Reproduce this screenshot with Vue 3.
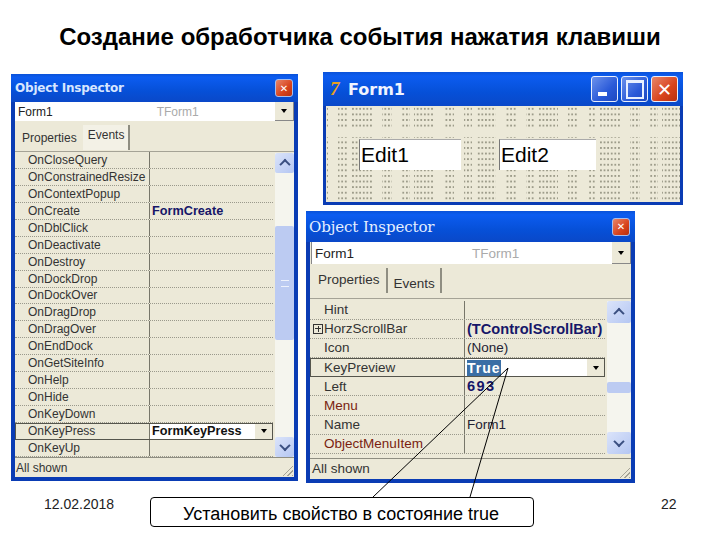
<script setup>
const eventRows = ['OnCloseQuery','OnConstrainedResize','OnContextPopup','OnCreate','OnDblClick','OnDeactivate','OnDestroy','OnDockDrop','OnDockOver','OnDragDrop','OnDragOver','OnEndDock','OnGetSiteInfo','OnHelp','OnHide','OnKeyDown','OnKeyPress','OnKeyUp'].map(name => ({
  name,
  value: name === 'OnCreate' ? 'FormCreate' : name === 'OnKeyPress' ? 'FormKeyPress' : '',
  bold: name === 'OnCreate',
  selected: name === 'OnKeyPress'
}))
const propRows = [
  { name: 'Hint', value: '' },
  { name: 'HorzScrollBar', value: '(TControlScrollBar)', bold: true, plus: true },
  { name: 'Icon', value: '(None)' },
  { name: 'KeyPreview', value: 'True', selected: true },
  { name: 'Left', value: '693', bold: true, wide: true },
  { name: 'Menu', value: '', red: true },
  { name: 'Name', value: 'Form1' },
  { name: 'ObjectMenuItem', value: '', red: true }
]
</script>

<template>
  <div class="slide">
    <h1 class="heading">Создание обработчика события нажатия клавиши</h1>

    <div class="desk">
      <section class="win insp-a">
        <header class="title">
          <span class="title-text">Object Inspector</span>
          <span class="btn close small">✕</span>
        </header>
        <div class="combo">
          <span class="combo-name">Form1</span>
          <span class="combo-type">TForm1</span>
          <span class="combo-arrow"><i class="tri"></i></span>
        </div>
        <div class="tabs">
          <span class="tab">Properties</span>
          <span class="tab active">Events</span>
        </div>
        <div class="grid-wrap">
          <div class="grid">
            <div v-for="r in eventRows" :key="r.name" class="row" :class="{ sel: r.selected }">
              <span class="name">{{ r.name }}</span>
              <span class="val" :class="{ bold: r.bold, strong: r.selected }">
                {{ r.value }}
                <span v-if="r.selected" class="drop"><i class="tri"></i></span>
              </span>
            </div>
          </div>
          <div class="scroll">
            <span class="sbtn"><i class="chev up"></i></span>
            <span class="track"><span class="thumb"><i class="grip"></i></span></span>
            <span class="sbtn"><i class="chev"></i></span>
          </div>
        </div>
        <footer class="status">All shown<i class="resize"></i></footer>
      </section>

      <section class="win form">
        <header class="title form-title">
          <span class="logo">7</span>
          <span class="form-text">Form1</span>
          <span class="btn blue"><i class="min"></i></span>
          <span class="btn blue"><i class="max"></i></span>
          <span class="btn close">✕</span>
        </header>
        <div class="client">
          <span class="edit">Edit1</span>
          <span class="edit">Edit2</span>
        </div>
      </section>

      <section class="win insp-b">
        <header class="title">
          <span class="title-text">Object Inspector</span>
          <span class="btn close small">✕</span>
        </header>
        <div class="combo">
          <span class="combo-name">Form1</span>
          <span class="combo-type">TForm1</span>
          <span class="combo-arrow"><i class="tri"></i></span>
        </div>
        <div class="tabs">
          <span class="tab active">Properties</span>
          <span class="tab">Events</span>
        </div>
        <div class="grid-wrap">
          <div class="grid">
            <div v-for="r in propRows" :key="r.name" class="row" :class="{ sel: r.selected }">
              <span class="name" :class="{ red: r.red }"><i v-if="r.plus" class="plus"></i>{{ r.name }}</span>
              <span class="val" :class="{ bold: r.bold, spaced: r.wide }">
                <mark v-if="r.selected" class="hl">{{ r.value }}</mark>
                <template v-else>{{ r.value }}</template>
                <span v-if="r.selected" class="drop"><i class="tri"></i></span>
              </span>
            </div>
          </div>
          <div class="scroll">
            <span class="sbtn"><i class="chev up"></i></span>
            <span class="track"><span class="thumb"></span></span>
            <span class="sbtn"><i class="chev"></i></span>
          </div>
        </div>
        <footer class="status">All shown<i class="resize"></i></footer>
      </section>
    </div>

    <footer class="foot">
      <span class="date">12.02.2018</span>
      <span class="callout">Установить свойство в состояние true</span>
      <span class="page">22</span>
    </footer>

    <svg class="leaders" width="720" height="540" viewBox="0 0 720 540">
      <path d="M373 497 L508 368 L470 497" fill="none" stroke="#000" stroke-width="1" />
    </svg>
  </div>
</template>

<style scoped>
.slide {
  position: relative;
  width: 720px;
  height: 540px;
  overflow: hidden;
  background: #fff;
  font-family: "Liberation Sans", Arial, sans-serif;
  color: #111;
}
.heading {
  margin: 0;
  height: 60px;
  padding-top: 24px;
  box-sizing: border-box;
  font-size: 24px;
  line-height: 26px;
  font-weight: 700;
  text-align: center;
  color: #000;
  white-space: nowrap;
}
.desk {
  position: relative;
  height: 430px;
}
.win {
  position: absolute;
  box-sizing: border-box;
  display: flex;
  flex-direction: column;
  background: #ece9d8;
  border: 4px solid #0a3cb4;
  border-top: 0;
  border-radius: 4px 4px 0 0;
}
.insp-a { left: 11px; top: 14px; width: 287px; height: 407px; font-size: 12px; }
.insp-b { left: 306px; top: 151px; width: 329px; height: 272px; font-size: 13.5px; }
.form { left: 323px; top: 12px; width: 360px; height: 133px; border-width: 0 3px 3px; }

.title {
  display: flex;
  align-items: center;
  flex: none;
  margin: 0 -4px;
  padding: 0 5px 0 4px;
  background: linear-gradient(#0a52d8, #0c5cf0 12%, #0650d8 60%, #0a48c8);
  color: #eaf2ff;
}
.insp-a .title { height: 28px; }
.insp-b .title { height: 31px; padding-left: 3px; }
.title-text { flex: 1; white-space: nowrap; }
.insp-a .title-text { font: 700 12px "DejaVu Sans", sans-serif; letter-spacing: -0.2px; color: #d8e6ff; }
.insp-b .title-text { font: 400 15px "DejaVu Serif", serif; letter-spacing: -0.1px; color: #e4eeff; }

.btn {
  display: flex;
  align-items: center;
  justify-content: center;
  box-sizing: border-box;
  width: 27px;
  height: 26px;
  border: 1px solid #e8eefc;
  border-radius: 3px;
  color: #fff;
  font: 700 18px "DejaVu Sans", sans-serif;
}
.btn.close { background: linear-gradient(135deg, #e8866a, #d8431c 60%, #b83010); }
.btn.small { width: 18px; height: 18px; font-size: 10px; border-color: #a9bdeb; }
.btn.blue { background: linear-gradient(135deg, #6c92ec, #2a5ad8 60%, #1d48c0); margin-right: 3px; }
.min { width: 9px; height: 4px; background: #fff; margin-top: 10px; margin-right: 4px; }
.max { width: 14px; height: 14px; border: 2px solid #e8f0ff; border-top-width: 3px; }

.form-title { height: 34px; margin: 0 -3px; padding: 0 5px 0 7px; }
.logo { width: 14px; font: italic 700 19px "Liberation Serif", serif; color: #e8a020; }
.form-text { flex: 1; margin-left: 4px; font: 700 16px "DejaVu Sans", sans-serif; color: #f0f4ff; }
.client {
  flex: 1;
  display: flex;
  align-items: flex-start;
  gap: 38px;
  padding: 33px 0 0 33px;
  background-color: #ece9d8;
  background-image:
    linear-gradient(#ece9d8, #ece9d8),
    repeating-linear-gradient(90deg, transparent 0 8px, #ece9d8 8px 12px, transparent 12px 32px, #ece9d8 32px 42px, transparent 42px 52px, #ece9d8 52px 62px),
    radial-gradient(circle, #8f8e7c 0.6px, transparent 0.9px);
  background-size: 100% 10px, auto, 3.6px 5.6px;
  background-position: 0 21px, 14px 0, 0 0;
  background-repeat: no-repeat, repeat, repeat;
}
.edit {
  box-sizing: border-box;
  width: 102px;
  height: 31px;
  padding-left: 1px;
  background: #fff;
  border-left: 1px solid #777;
  border-top: 1px solid #aaa;
  font-size: 21px;
  line-height: 29px;
  color: #000;
}
.edit + .edit { width: 97px; }

.combo {
  display: flex;
  align-items: center;
  flex: none;
  background: #fff;
  padding-left: 3px;
  white-space: nowrap;
}
.insp-a .combo { height: 19px; }
.insp-b .combo { height: 22px; margin-left: 1px; border-left: 1px solid #888; }
.combo-name { color: #222; }
.combo-type { color: #aaa; }
.insp-a .combo-type { margin-left: 104px; flex: 1; }
.insp-b .combo-type { margin-left: 118px; flex: 1; }
.combo-arrow {
  display: flex;
  align-items: center;
  justify-content: center;
  align-self: stretch;
  width: 18px;
  background: #ece9d8;
  border-right: 1px solid #888;
  border-bottom: 1px solid #888;
}
.tri {
  width: 0;
  height: 0;
  border: 3.5px solid transparent;
  border-top: 4px solid #000;
  border-bottom: 0;
}
.tabs {
  display: flex;
  align-items: flex-start;
  flex: none;
  padding: 4px 0 0 2px;
  white-space: nowrap;
}
.insp-a .tabs { height: 28px; box-sizing: border-box; margin-bottom: 2px; font-size: 12px; }
.insp-b .tabs { height: 31px; box-sizing: border-box; margin-bottom: 3px; font-size: 13.5px; }
.tab {
  padding: 7px 5px 3px 5px;
  color: #333;
  border-right: 2px solid #8f8e82;
  height: 11px;
  line-height: 11px;
}
.insp-a .tab { border-right: 0; padding-right: 6px; padding-top: 8px; }
.insp-a .tab.active { padding-top: 5px; padding-right: 4px; border-right: 2px solid #8f8e82; height: 17px; background: #f3f1e6; }
.insp-b .tab.active { padding: 6px 6px 4px 6px; height: 15px; }
.insp-b .tab:not(.active) { padding-top: 10px; height: 12px; margin-left: 1px; }

.grid-wrap {
  flex: none;
  display: flex;
  gap: 2px;
  border-top: 1px solid #a5a396;
}
.insp-a .grid-wrap { height: 306px; box-sizing: border-box; }
.insp-b .grid-wrap { height: 160px; box-sizing: border-box; }
.grid { flex: 1; display: flex; flex-direction: column; }
.insp-b .grid { padding-top: 1.5px; }
.row {
  flex: none;
  display: flex;
  align-items: center;
  box-sizing: border-box;
  border-bottom: 1px dotted #9a998c;
  white-space: nowrap;
  color: #333;
}
.insp-a .row { height: 16.94px; }
.insp-b .row { height: 19.2px; }
.name { height: 100%; display: flex; align-items: center; box-sizing: border-box; border-right: 1px solid #77766a; flex: none; }
.insp-a .name { width: 135px; padding-left: 13px; }
.insp-b .name { width: 155px; padding-left: 14px; }
.insp-a .sel .name { width: 134px; padding-left: 12px; }
.insp-b .sel .name { width: 154px; padding-left: 13px; }
.red { color: #7a1e10; }
.val { flex: 1; display: flex; align-items: center; height: 100%; padding-left: 2px; color: #223; }
.bold { font-weight: 700; color: #161668; }
.insp-a .bold, .strong { font-size: 12.7px; }
.insp-b .bold { font-size: 14.6px; }
.spaced { letter-spacing: 1.4px; }
.strong { font-weight: 700; color: #111; }
.sel { background: #fff; border: 1px solid #55554c; border-bottom-color: #55554c; }
.sel .name { background: #ece9d8; }
.drop {
  margin-left: auto;
  display: flex;
  align-items: center;
  justify-content: center;
  align-self: stretch;
  width: 17px;
  background: #ece9d8;
}
.hl { background: #3a6ea5; color: #fff; font-weight: 700; letter-spacing: 1px; font-size: 14px; }

.scroll {
  flex: none;
  display: flex;
  flex-direction: column;
  background: #f5f5ee;
}
.insp-a .scroll { width: 19px; margin-top: 1px; }
.insp-b .scroll { width: 24px; margin: 2px 0 4px; }
.sbtn {
  flex: none;
  display: flex;
  align-items: center;
  justify-content: center;
  background: linear-gradient(135deg, #dbe4fa, #b4c6f2);
  border-radius: 2px;
}
.insp-a .sbtn { height: 20px; }
.insp-b .sbtn { height: 22px; }
.track { flex: 1; position: relative; }
.thumb {
  position: absolute;
  left: 0;
  right: 0;
  display: flex;
  align-items: center;
  justify-content: center;
  background: #bccbf2;
  border-radius: 2px;
}
.insp-a .thumb { top: 53px; height: 114px; }
.insp-b .thumb { top: 59px; height: 11px; }
.grip { width: 8px; height: 5px; border-top: 1px solid #eef2fc; border-bottom: 1px solid #eef2fc; }
.chev {
  width: 6px;
  height: 6px;
  border-right: 2px solid #3a4f80;
  border-bottom: 2px solid #3a4f80;
  transform: rotate(45deg) translate(-1px, -1px);
}
.chev.up { transform: rotate(225deg) translate(-1px, -1px); }
.plus {
  flex: none;
  box-sizing: border-box;
  width: 10px;
  height: 10px;
  margin: 0 1px 0 -11px;
  border: 1px solid #333;
  background:
    linear-gradient(#333, #333) center / 6px 1px no-repeat,
    linear-gradient(#333, #333) center / 1px 6px no-repeat;
}
.status {
  position: relative;
  flex: 1;
  min-height: 0;
  border-top: 1px solid #8f8e82;
  line-height: 20px;
  padding-left: 1px;
  color: #333;
  white-space: nowrap;
}
.insp-b .status { padding-left: 2px; }
.insp-a .status { font-size: 12px; }
.resize {
  position: absolute;
  right: 1px;
  bottom: 1px;
  width: 13px;
  height: 13px;
  background: repeating-linear-gradient(135deg, transparent 0 2px, #a5a396 2px 3px);
  clip-path: polygon(100% 0, 100% 100%, 0 100%);
}

.foot {
  display: flex;
  align-items: flex-start;
  padding: 7px 0 0 44px;
}
.date { width: 106px; font-size: 14px; line-height: 15px; color: #222; }
.callout {
  box-sizing: border-box;
  width: 384px;
  height: 30px;
  padding: 5px 0 0 32px;
  background: #fff;
  border: 1px solid #000;
  border-radius: 4px;
  font-size: 18px;
  line-height: 22px;
  color: #000;
  white-space: nowrap;
}
.page { margin-left: 127px; font-size: 14px; line-height: 15px; color: #222; }
.leaders { position: absolute; left: 0; top: 0; pointer-events: none; }
</style>
